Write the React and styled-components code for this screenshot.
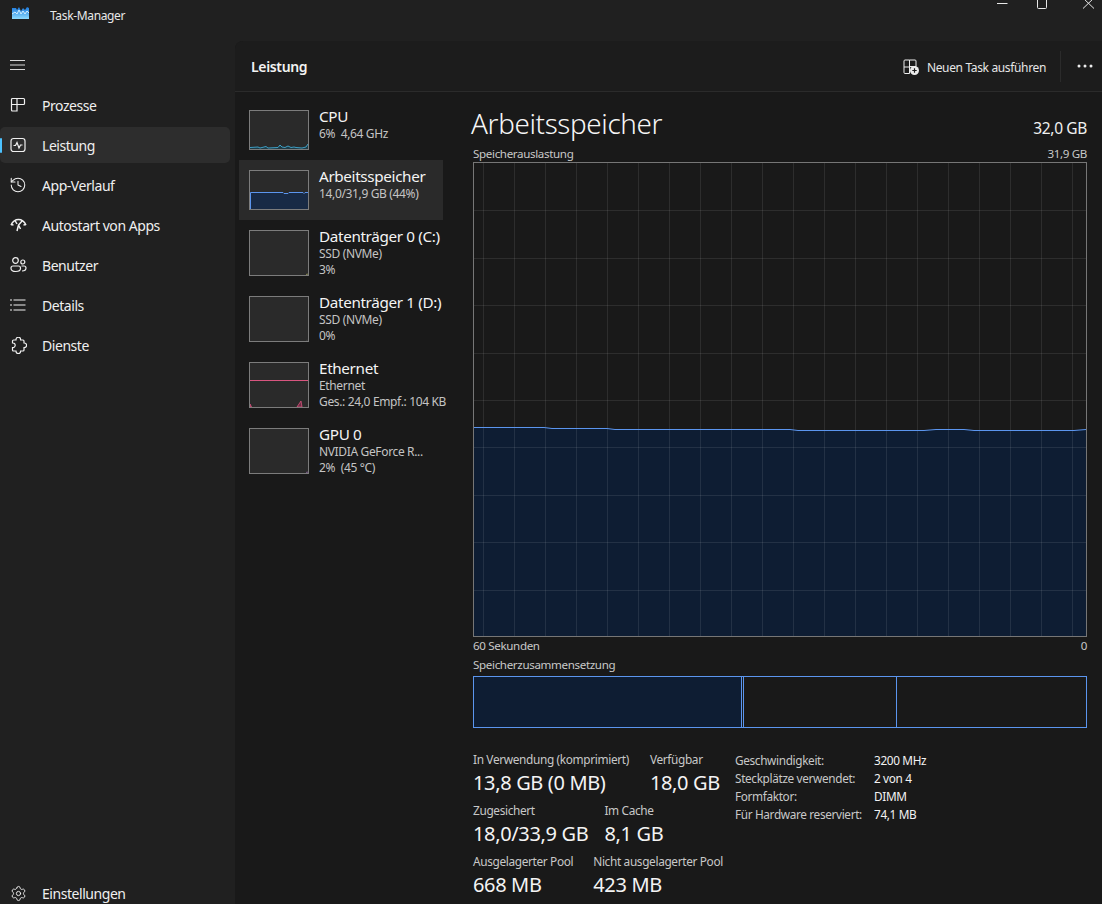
import React from 'react';
import styled, { createGlobalStyle } from 'styled-components';
import { History, Settings } from 'lucide-react';

const GlobalStyle = createGlobalStyle`
  html, body {
    margin: 0;
    padding: 0;
    background: #202020;
    overflow: hidden;
  }
  * {
    box-sizing: border-box;
  }
`;

const Window = styled.div`
  width: 1102px;
  height: 904px;
  display: flex;
  flex-direction: column;
  overflow: hidden;
  background: #202020;
  color: #f2f2f2;
  font-family: "Noto Sans", "Open Sans", sans-serif;
  letter-spacing: -0.35px;
`;

const TitleBar = styled.header`
  height: 41px;
  flex: none;
  display: flex;
  align-items: flex-start;
`;

const AppLogo = styled.svg`
  width: 17px;
  height: 13px;
  margin: 7px 0 0 12px;
`;

const AppTitle = styled.span`
  margin: 7px 0 0 21px;
  font-size: 12px;
  line-height: 18px;
  color: #e8e8e8;
`;

const WindowButtons = styled.div`
  margin-left: auto;
  display: flex;
  align-items: flex-start;
  padding-right: 8px;
`;

const WindowButton = styled.svg`
  width: 11px;
  height: 10px;
  margin-left: ${(props) => props.$gap}px;
`;

const Body = styled.div`
  flex: 1;
  min-height: 0;
  display: flex;
`;

const Sidebar = styled.nav`
  width: 235px;
  flex: none;
  display: flex;
  flex-direction: column;
  padding-right: 5px;
`;

const MenuButton = styled.div`
  height: 42px;
  flex: none;
  padding: 18px 0 0 10px;
`;

const MenuLines = styled.svg`
  display: block;
  width: 15px;
  height: 12px;
`;

const NavItem = styled.div`
  position: relative;
  height: 36px;
  flex: none;
  margin-top: 4px;
  display: flex;
  align-items: center;
  padding-left: 10px;
  border-radius: 5px;
  font-size: 14px;
  letter-spacing: -0.45px;
  color: #efefef;
  background: ${(props) => (props.$active ? '#2d2d2d' : 'transparent')};
`;

const ActiveMark = styled.span`
  position: absolute;
  left: 0;
  top: 11px;
  width: 2px;
  height: 15px;
  border-radius: 2px;
  background: #4cc2ff;
`;

const NavIcon = styled.span`
  width: 16px;
  height: 16px;
  flex: none;
  margin-right: 16px;
  display: flex;
  align-items: center;
  justify-content: center;
  color: #f0f0f0;

  svg {
    flex: none;
  }
`;

const SettingsItem = styled(NavItem)`
  margin-top: auto;
  margin-bottom: -7px;
`;

const Main = styled.main`
  flex: 1;
  min-width: 0;
  display: flex;
  flex-direction: column;
  background: #191919;
  border-top-left-radius: 8px;
`;

const PageHeader = styled.div`
  height: 51px;
  flex: none;
  display: flex;
  align-items: center;
  padding: 0 9px 0 16px;
  background: #1c1c1c;
  border-top-left-radius: 8px;
  border-bottom: 1px solid #2b2b2b;
`;

const PageTitle = styled.h1`
  margin: 0;
  font-size: 14px;
  font-weight: 600;
  color: #f2f2f2;
`;

const RunTask = styled.div`
  margin-left: auto;
  display: flex;
  align-items: center;
  gap: 8px;
  padding-top: 2px;
  font-size: 12px;
  color: #e6e6e6;
`;

const Separator = styled.span`
  width: 1px;
  height: 31px;
  margin: 0 16px 0 14px;
  background: #2b2b2b;
`;

const MoreDots = styled.svg`
  width: 16px;
  height: 4px;
`;

const Content = styled.div`
  flex: 1;
  min-height: 0;
  display: flex;
`;

const DeviceList = styled.div`
  width: 208px;
  flex: none;
  margin-left: 4px;
  padding-top: 8px;
  display: flex;
  flex-direction: column;
`;

const Device = styled.div`
  height: ${(props) => props.$height}px;
  flex: none;
  display: flex;
  gap: 10px;
  padding: 10px 0 0 10px;
  background: ${(props) => (props.$active ? '#2a2a2a' : 'transparent')};
  width: 204px;
  white-space: nowrap;
`;

const Thumb = styled.div`
  width: 60px;
  height: ${(props) => props.$height}px;
  flex: none;
  background: #2a2a2a;
  border: 1px solid #7c7c7c;
  overflow: hidden;
`;

const ThumbChart = styled.svg`
  display: block;
  width: 58px;
  height: 100%;
`;

const DeviceText = styled.div`
  display: flex;
  flex-direction: column;
  margin-top: -4px;
`;

const DeviceName = styled.div`
  font-size: 15.25px;
  line-height: 20px;
  color: #f4f4f4;
`;

const DeviceInfo = styled.div`
  font-size: 12px;
  line-height: 16px;
  white-space: pre;
  color: #c4c4c4;
`;

const Detail = styled.section`
  width: 614px;
  flex: none;
  margin-left: 26px;
  display: flex;
  flex-direction: column;
`;

const DetailHead = styled.div`
  height: 52px;
  flex: none;
  padding-top: 10px;
  display: flex;
  align-items: center;
  justify-content: space-between;
`;

const DetailTitle = styled.h2`
  margin: 0 0 0 -2px;
  font-size: 27.8px;
  font-weight: 300;
  color: #f6f6f6;
`;

const DetailTotal = styled.span`
  margin-top: 10px;
  font-size: 15.5px;
  color: #f0f0f0;
`;

const Caption = styled.div`
  height: 18px;
  flex: none;
  display: flex;
  align-items: center;
  justify-content: space-between;
  font-size: 11.6px;
  color: #c8c8c8;
`;

const Graph = styled.div`
  height: 475px;
  flex: none;
  background: #191919;
  border: 1px solid #767676;
`;

const GraphChart = styled.svg`
  display: block;
  width: 612px;
  height: 473px;
`;

const TimeAxis = styled(Caption)`
  margin-top: -1px;
`;

const CompositionLabel = styled(Caption)`
  margin-top: 1px;
  margin-bottom: 3px;
`;

const Composition = styled.div`
  height: 52px;
  flex: none;
  display: flex;
  border: 1px solid #5b95ee;
`;

const Segment = styled.div`
  width: ${(props) => props.$width}px;
  flex: ${(props) => (props.$grow ? 1 : 'none')};
  background: ${(props) => (props.$used ? '#0e1d33' : 'transparent')};
  border-right: ${(props) => (props.$grow ? 'none' : '1px solid #5b95ee')};
`;

const Stats = styled.div`
  margin-top: 22px;
  display: flex;
`;

const StatColumn = styled.div`
  width: 262px;
  flex: none;
  display: flex;
  flex-direction: column;
`;

const StatRow = styled.div`
  height: 51px;
  flex: none;
  display: flex;
  gap: ${(props) => props.$gap}px;
`;

const Stat = styled.div`
  display: flex;
  flex-direction: column;
  white-space: nowrap;
`;

const StatLabel = styled.div`
  height: 18px;
  font-size: 11.85px;
  line-height: 18px;
  color: #c8c8c8;
`;

const StatValue = styled.div`
  height: 28px;
  margin-top: 1px;
  font-size: 20px;
  line-height: 28px;
  color: #f4f4f4;
`;

const SpecTable = styled.div`
  margin-top: 1px;
  display: grid;
  grid-template-columns: 139px auto;
  grid-auto-rows: 18px;
  align-self: flex-start;
  font-size: 11.8px;
  line-height: 18px;
  white-space: nowrap;
`;

const SpecName = styled.div`
  color: #c8c8c8;
`;

const SpecValue = styled.div`
  color: #f2f2f2;
`;

const stroke = { fill: 'none', stroke: 'currentColor', strokeWidth: 1.2 };

const TilesIcon = () => (
  <svg width="16" height="16" viewBox="0 0 16 16" {...stroke}>
    <path d="M1.500 7.500V2.500a1 1 0 0 1 1-1h4.500v12.500H2.500a1 1 0 0 1-1-1v-5.500H7" />
    <path d="M7 1.500h6.500a1 1 0 0 1 1 1v4a1 1 0 0 1-1 1H7" />
  </svg>
);

const PulseIcon = () => (
  <svg width="16" height="16" viewBox="0 0 16 16" {...stroke}>
    <rect x="1" y="1.500" width="14" height="13" rx="2.500" />
    <path d="M3.500 8.500h2l1.500-3 2 5.500 1.500-3h2" />
  </svg>
);

const GaugeIcon = () => (
  <svg width="17" height="16" viewBox="0 0 17 16" fill="none" stroke="currentColor" strokeWidth="1.500">
    <path d="M1 8C3 4 5.500 2.500 8.500 2.500S14 4 16 8" />
    <path d="M1 7.500l2.500.5M16 7.500l-2.500.5" />
    <path d="M12.500 3.500L8.500 8 7 14M8.500 8l2 4" />
    <path d="M5 3.500l2 3.500" />
  </svg>
);

const UsersIcon = () => (
  <svg width="17" height="16" viewBox="0 0 17 16" {...stroke}>
    <circle cx="5.500" cy="3.500" r="2.800" />
    <circle cx="12.800" cy="5" r="2" />
    <path d="M1 11a2 2 0 0 1 2-2h5.500a2 2 0 0 1 2 2v.5c0 2-2 3-4.800 3S1 13.500 1 11.500z" />
    <path d="M11.500 9h2.500a2 2 0 0 1 2 2c0 2-1.500 3-4 3" />
  </svg>
);

const ListIcon = () => (
  <svg width="16" height="16" viewBox="0 0 16 16" {...stroke}>
    <path d="M3.500 3h12M3.500 8h12M3.500 13h12" />
    <path d="M0.500 3h1M0.500 8h1M0.500 13h1" strokeWidth="1.800" />
  </svg>
);

const ServiceIcon = () => (
  <svg width="17" height="17" viewBox="0 0 17 17" {...stroke}>
    <path d="M6 3V2.500a2.300 2.300 0 0 1 4.600 0V3H13a1 1 0 0 1 1 1V6h.3a2.300 2.300 0 0 1 0 4.600H14V13a1 1 0 0 1-1 1H10.600v.3a2.300 2.300 0 0 1-4.600 0V14H3.500a1 1 0 0 1-1-1V10.600h.4a2.300 2.300 0 0 0 0-4.600H2.500V4a1 1 0 0 1 1-1z" />
  </svg>
);

const RunTaskIcon = () => (
  <svg width="16" height="16" viewBox="0 0 16 16">
    <path d="M1 8V2a1 1 0 0 1 1-1h4.500v13.500H2a1 1 0 0 1-1-1V8h5.500M6.500 1H12a1 1 0 0 1 1 1v5.500H6.500" fill="none" stroke="#ececec" strokeWidth="1" />
    <circle cx="11.500" cy="11.500" r="4.500" fill="#ececec" />
    <path d="M11.500 9.300v4.400M9.300 11.500h4.400" stroke="#1c1c1c" strokeWidth="1.200" />
  </svg>
);

const NAV_ITEMS = [
  { label: 'Prozesse', icon: <TilesIcon /> },
  { label: 'Leistung', icon: <PulseIcon />, active: true },
  { label: 'App-Verlauf', icon: <History size={18} strokeWidth={1.4} /> },
  { label: 'Autostart von Apps', icon: <GaugeIcon /> },
  { label: 'Benutzer', icon: <UsersIcon /> },
  { label: 'Details', icon: <ListIcon /> },
  { label: 'Dienste', icon: <ServiceIcon /> },
];

const CpuLine = () => (
  <ThumbChart viewBox="0 0 58 38" preserveAspectRatio="none">
    <path d="M0 36.500L8 36 10 37 14 36 16 35.500 18 37 28 36.500 30 34 32 36 35 36.500 38 35 41 36.500 44 36 46 36.500 52 37 56 36 58 33V38H0z" fill="#1d3a45" />
    <path d="M0 36.500L8 36 10 37 14 36 16 35.500 18 37 28 36.500 30 34 32 36 35 36.500 38 35 41 36.500 44 36 46 36.500 52 37 56 36 58 33" fill="none" stroke="#3f9fc4" strokeWidth="1" />
  </ThumbChart>
);

const MemoryLine = () => (
  <ThumbChart viewBox="0 0 58 38" preserveAspectRatio="none">
    <path d="M0 21.500H33L34 22.500H38L39 21.500H53L54 22.500 55 21.500H58V38H0z" fill="#182a45" />
    <path d="M0.500 38V21.500H33L34 22.500H38L39 21.500H53L54 22.500 55 21.500H58" fill="none" stroke="#5b95ee" strokeWidth="1" />
  </ThumbChart>
);

const DiskLine = ({ color }) => (
  <ThumbChart viewBox="0 0 58 44" preserveAspectRatio="none">
    <path d="M56.500 44V43.200H58" fill="none" stroke={color} strokeWidth="1" />
  </ThumbChart>
);

const EthernetLine = () => (
  <ThumbChart viewBox="0 0 58 44" preserveAspectRatio="none">
    <path d="M0 17.500H58" fill="none" stroke="#d8557f" strokeWidth="1" />
    <path d="M0 44V41L1.500 44zM47 44L51 38 52 44z" fill="#6e2b44" stroke="#d8557f" strokeWidth="0.800" />
  </ThumbChart>
);

const DEVICES = [
  { name: 'CPU', info: ['6%  4,64 GHz'], height: 60, thumb: 40, chart: <CpuLine /> },
  { name: 'Arbeitsspeicher', info: ['14,0/31,9 GB (44%)'], height: 60, thumb: 40, chart: <MemoryLine />, active: true },
  { name: 'Datenträger 0 (C:)', info: ['SSD (NVMe)', '3%'], height: 66, thumb: 46, chart: <DiskLine color="#8a8a55" /> },
  { name: 'Datenträger 1 (D:)', info: ['SSD (NVMe)', '0%'], height: 66, thumb: 46, chart: <DiskLine color="#3a3a3a" /> },
  { name: 'Ethernet', info: ['Ethernet', 'Ges.: 24,0 Empf.: 104 KB'], height: 66, thumb: 46, chart: <EthernetLine /> },
  { name: 'GPU 0', info: ['NVIDIA GeForce R...', '2%  (45 °C)'], height: 66, thumb: 46, chart: <DiskLine color="#7a5a8a" /> },
];

const STAT_ROWS = [
  { gap: 21, stats: [['In Verwendung (komprimiert)', '13,8 GB (0 MB)'], ['Verfügbar', '18,0 GB']] },
  { gap: 16, stats: [['Zugesichert', '18,0/33,9 GB'], ['Im Cache', '8,1 GB']] },
  { gap: 20, stats: [['Ausgelagerter Pool', '668 MB'], ['Nicht ausgelagerter Pool', '423 MB']] },
];

const SPECS = [
  ['Geschwindigkeit:', '3200 MHz'],
  ['Steckplätze verwendet:', '2 von 4'],
  ['Formfaktor:', 'DIMM'],
  ['Für Hardware reserviert:', '74,1 MB'],
];

const verticalLines = Array.from({ length: 20 }, (_, i) => 9.5 + i * 31);
const horizontalLines = Array.from({ length: 9 }, (_, i) => 47.4 * (i + 1));

const USAGE = 'M0 264.500H70L78 265.500H133L141 266.500H316L324 267.500H450L462 266.500H490L500 267.500H600L612 266.500';

const MemoryGraph = () => (
  <GraphChart viewBox="0 0 612 473">
    <path d={`${USAGE}V473H0z`} fill="#0e1d33" />
    {verticalLines.map((x) => (
      <path key={x} d={`M${x} 0V473`} stroke="#ffffff" strokeOpacity="0.09" />
    ))}
    {horizontalLines.map((y) => (
      <path key={y} d={`M0 ${Math.round(y) + 0.5}H612`} stroke="#ffffff" strokeOpacity="0.09" />
    ))}
    <path d={USAGE} fill="none" stroke="#5b95ee" strokeWidth="1" />
  </GraphChart>
);

export default function App() {
  return (
    <Window>
      <GlobalStyle />
      <TitleBar>
        <AppLogo viewBox="0 0 17 13">
          <defs>
            <linearGradient id="logoFill" x1="0" y1="0" x2="0" y2="1">
              <stop offset="0" stopColor="#1a78dc" />
              <stop offset="1" stopColor="#8fdcff" />
            </linearGradient>
          </defs>
          <path d="M0 1H4L5 3 7 0 9 4 11 1 13 3 15 0 17 1V12H0z" fill="url(#logoFill)" />
          <path d="M0 7L3 5 5 7 7 3 9 7 11 4 13 7 15 4 17 6" fill="none" stroke="#cfeeff" strokeWidth="1" />
        </AppLogo>
        <AppTitle>Task-Manager</AppTitle>
        <WindowButtons>
          <WindowButton viewBox="0 0 11 10" $gap={0}>
            <path d="M0 3.500H10.500" stroke="#e8e8e8" />
          </WindowButton>
          <WindowButton viewBox="0 0 11 10" $gap={29}>
            <rect x="0.500" y="-4" width="9" height="12.500" rx="1" fill="none" stroke="#e8e8e8" />
          </WindowButton>
          <WindowButton viewBox="0 0 11 10" $gap={35}>
            <path d="M0 -2L11 8.500M11 -2L0 8.500" fill="none" stroke="#e8e8e8" />
          </WindowButton>
        </WindowButtons>
      </TitleBar>
      <Body>
        <Sidebar>
          <MenuButton>
            <MenuLines viewBox="0 0 15 12">
              <path d="M0 1.500H15M0 6H15M0 10.500H15" stroke="#d8d8d8" strokeWidth="1" />
            </MenuLines>
          </MenuButton>
          {NAV_ITEMS.map((item) => (
            <NavItem key={item.label} $active={item.active}>
              {item.active && <ActiveMark />}
              <NavIcon>{item.icon}</NavIcon>
              {item.label}
            </NavItem>
          ))}
          <SettingsItem>
            <NavIcon><Settings size={17} strokeWidth={1.3} /></NavIcon>
            Einstellungen
          </SettingsItem>
        </Sidebar>
        <Main>
          <PageHeader>
            <PageTitle>Leistung</PageTitle>
            <RunTask>
              <RunTaskIcon />
              Neuen Task ausführen
            </RunTask>
            <Separator />
            <MoreDots viewBox="0 0 16 4">
              <circle cx="2" cy="2" r="1.500" fill="#ececec" />
              <circle cx="8" cy="2" r="1.500" fill="#ececec" />
              <circle cx="14" cy="2" r="1.500" fill="#ececec" />
            </MoreDots>
          </PageHeader>
          <Content>
            <DeviceList>
              {DEVICES.map((device) => (
                <Device key={device.name} $height={device.height} $active={device.active}>
                  <Thumb $height={device.thumb}>{device.chart}</Thumb>
                  <DeviceText>
                    <DeviceName>{device.name}</DeviceName>
                    {device.info.map((line) => (
                      <DeviceInfo key={line}>{line}</DeviceInfo>
                    ))}
                  </DeviceText>
                </Device>
              ))}
            </DeviceList>
            <Detail>
              <DetailHead>
                <DetailTitle>Arbeitsspeicher</DetailTitle>
                <DetailTotal>32,0 GB</DetailTotal>
              </DetailHead>
              <Caption>
                <span>Speicherauslastung</span>
                <span>31,9 GB</span>
              </Caption>
              <Graph>
                <MemoryGraph />
              </Graph>
              <TimeAxis>
                <span>60 Sekunden</span>
                <span>0</span>
              </TimeAxis>
              <CompositionLabel>
                <span>Speicherzusammensetzung</span>
              </CompositionLabel>
              <Composition>
                <Segment $width={268} $used />
                <Segment $width={2} />
                <Segment $width={153} />
                <Segment $grow />
              </Composition>
              <Stats>
                <StatColumn>
                  {STAT_ROWS.map((row) => (
                    <StatRow key={row.stats[0][0]} $gap={row.gap}>
                      {row.stats.map(([label, value]) => (
                        <Stat key={label}>
                          <StatLabel>{label}</StatLabel>
                          <StatValue>{value}</StatValue>
                        </Stat>
                      ))}
                    </StatRow>
                  ))}
                </StatColumn>
                <SpecTable>
                  {SPECS.map(([name, value]) => (
                    <React.Fragment key={name}>
                      <SpecName>{name}</SpecName>
                      <SpecValue>{value}</SpecValue>
                    </React.Fragment>
                  ))}
                </SpecTable>
              </Stats>
            </Detail>
          </Content>
        </Main>
      </Body>
    </Window>
  );
}
